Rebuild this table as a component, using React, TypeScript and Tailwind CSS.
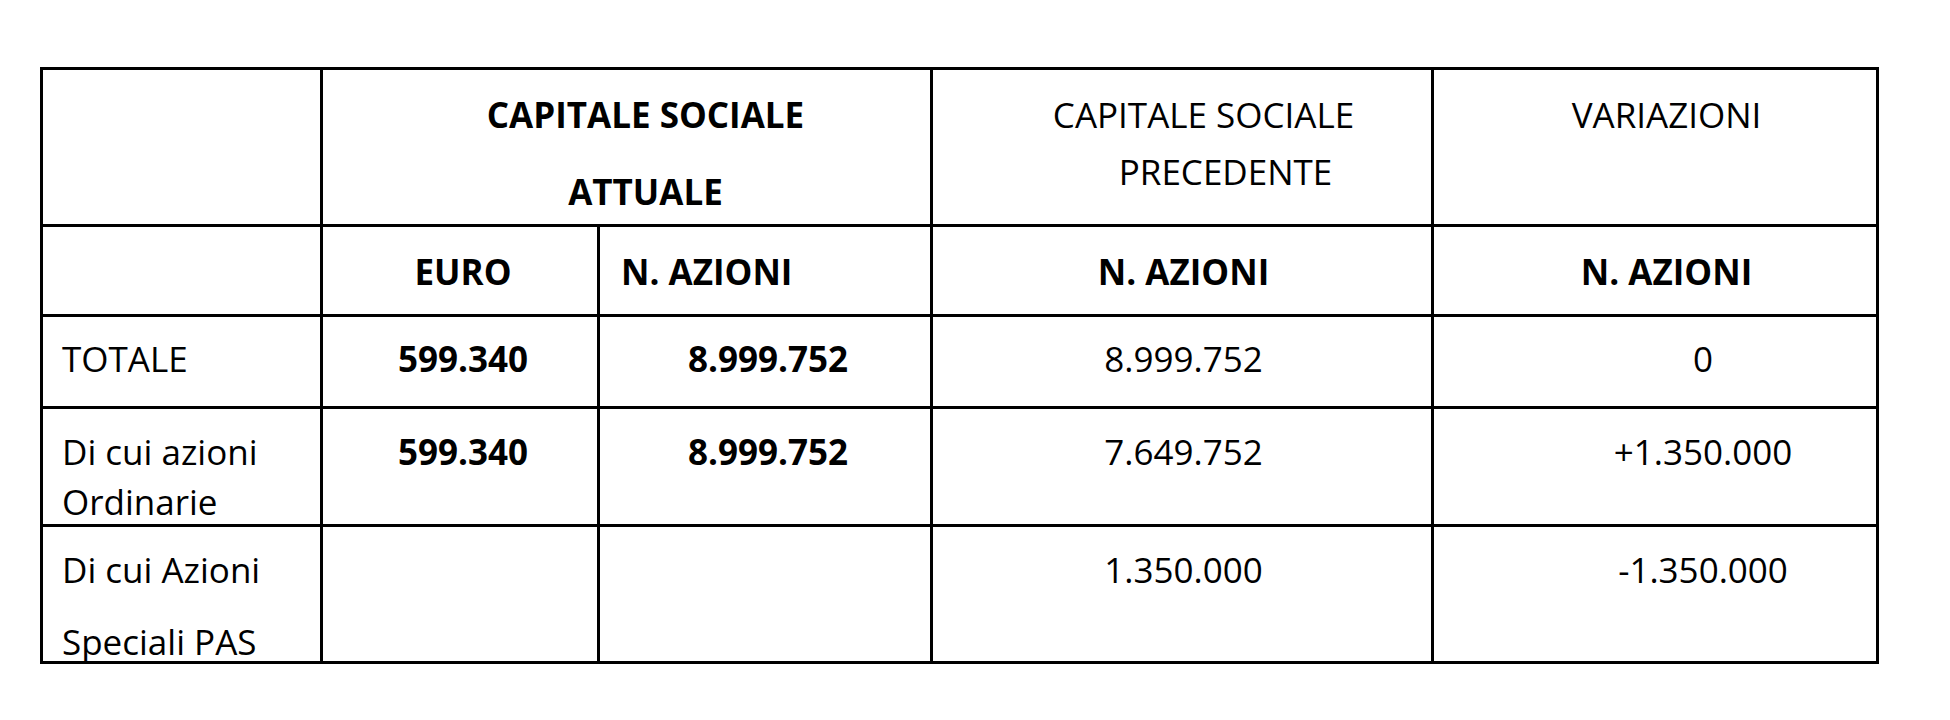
const td = "border-[3px] border-black align-top p-0";

function Txt({ className = "", children }: { className?: string; children?: React.ReactNode }) {
  // h-0 keeps the text from stretching the fixed row heights
  return <div className={`h-0 whitespace-nowrap ${className}`}>{children}</div>;
}

export default function App() {
  return (
    <div className="min-h-screen bg-white pt-[67px] pl-[40px]">
      <table className="table-fixed border-collapse w-[1839px] font-['Open_Sans',sans-serif] text-[35px] text-black">
        <colgroup>
          <col className="w-[280px]" />
          <col className="w-[277px]" />
          <col className="w-[333px]" />
          <col className="w-[501px]" />
          <col className="w-[445px]" />
        </colgroup>
        <tbody>
          <tr className="h-[157px]">
            <td className={td} />
            <td colSpan={2} className={td}>
              <Txt className="pt-[6px] pl-[38px] text-center font-bold leading-[77px]">
                CAPITALE SOCIALE
                <br />
                ATTUALE
              </Txt>
            </td>
            <td className={td}>
              <Txt className="pt-[16px] leading-[57px]">
                <div className="pl-[43px] text-center">CAPITALE SOCIALE</div>
                <div className="pl-[87px] text-center">PRECEDENTE</div>
              </Txt>
            </td>
            <td className={td}>
              <Txt className="pt-[16px] pl-[23px] text-center leading-[57px]">VARIAZIONI</Txt>
            </td>
          </tr>

          <tr className="h-[90px]">
            <td className={td} />
            <td className={td}>
              <Txt className="pt-[20px] pl-[6px] text-center font-bold leading-[50px]">EURO</Txt>
            </td>
            <td className={td}>
              <Txt className="pt-[20px] pl-[21px] font-bold leading-[50px]">N. AZIONI</Txt>
            </td>
            <td className={td}>
              <Txt className="pt-[20px] pl-[3px] text-center font-bold leading-[50px]">N. AZIONI</Txt>
            </td>
            <td className={td}>
              <Txt className="pt-[20px] pl-[23px] text-center font-bold leading-[50px]">N. AZIONI</Txt>
            </td>
          </tr>

          <tr className="h-[92px]">
            <td className={td}>
              <Txt className="pt-[17px] pl-[19px] leading-[50px]">TOTALE</Txt>
            </td>
            <td className={td}>
              <Txt className="pt-[17px] pl-[6px] text-center font-bold leading-[50px]">599.340</Txt>
            </td>
            <td className={td}>
              <Txt className="pt-[17px] pl-[6px] text-center font-bold leading-[50px]">8.999.752</Txt>
            </td>
            <td className={td}>
              <Txt className="pt-[17px] pl-[3px] text-center leading-[50px]">8.999.752</Txt>
            </td>
            <td className={td}>
              <Txt className="pt-[17px] pl-[96px] text-center leading-[50px]">0</Txt>
            </td>
          </tr>

          <tr className="h-[118px]">
            <td className={td}>
              <Txt className="pt-[18px] pl-[19px] leading-[50px]">
                Di cui azioni
                <br />
                Ordinarie
              </Txt>
            </td>
            <td className={td}>
              <Txt className="pt-[18px] pl-[6px] text-center font-bold leading-[50px]">599.340</Txt>
            </td>
            <td className={td}>
              <Txt className="pt-[18px] pl-[6px] text-center font-bold leading-[50px]">8.999.752</Txt>
            </td>
            <td className={td}>
              <Txt className="pt-[18px] pl-[3px] text-center leading-[50px]">7.649.752</Txt>
            </td>
            <td className={td}>
              <Txt className="pt-[18px] pl-[96px] text-center leading-[50px]">+1.350.000</Txt>
            </td>
          </tr>

          <tr className="h-[137px]">
            <td className={td}>
              <Txt className="pt-[7px] pl-[19px] leading-[72px]">
                Di cui Azioni
                <br />
                Speciali PAS
              </Txt>
            </td>
            <td className={td} />
            <td className={td} />
            <td className={td}>
              <Txt className="pt-[7px] pl-[3px] text-center leading-[72px]">1.350.000</Txt>
            </td>
            <td className={td}>
              <Txt className="pt-[7px] pl-[96px] text-center leading-[72px]">-1.350.000</Txt>
            </td>
          </tr>
        </tbody>
      </table>
    </div>
  );
}
